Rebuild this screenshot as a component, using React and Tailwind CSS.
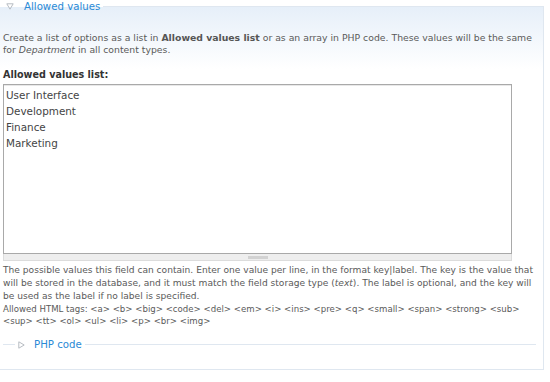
import React from "react";

const values = ["User Interface", "Development", "Finance", "Marketing"];

function DownTriangle() {
  return (
    <svg width="8" height="7" viewBox="0 0 8 7" className="shrink-0">
      <path d="M0.8 0.8 H7.2 L4 6.2 Z" fill="none" stroke="#b7bcc2" strokeWidth="1" />
    </svg>
  );
}

function RightTriangle() {
  return (
    <svg width="7" height="8" viewBox="0 0 7 8" className="shrink-0">
      <path d="M0.8 0.8 V7.2 L6.2 4 Z" fill="none" stroke="#b7bcc2" strokeWidth="1" />
    </svg>
  );
}

export default function App() {
  return (
    <div className="h-[382px] w-[550px] overflow-hidden bg-white font-['DejaVu_Sans',Verdana,sans-serif] text-[#5a5a5a]">
      <fieldset className="w-[544px] border-t border-r border-b border-[#dfe7f0] bg-[linear-gradient(to_bottom,#e6eff9,#ffffff_62px)] pb-[18px]">
        <legend className="flex items-center pr-[3px]">
          <span className="flex w-[24px] justify-center pl-[2px] pr-[6px]">
            <DownTriangle />
          </span>
          <span className="text-[10.2px] leading-[13px] text-[#2a8ad6]">Allowed values</span>
        </legend>

        <div className="pl-[3px]">
          <p className="mt-[19px] text-[9.3px] leading-[12px]">
            Create a list of options as a list in <b className="font-bold text-[#555]">Allowed values list</b> or as an array in PHP code. These values will be the same for <i>Department</i> in all content types.
          </p>

          <p className="mt-[12px] text-[9.6px] font-bold leading-[13px] text-[#333]">Allowed values list:</p>

          <div className="mt-[3px] w-[509px]">
            <div className="h-[170px] border border-[#a9a9a9] bg-white px-[2px] pt-[2px] shadow-[inset_0_1px_0_#e8e8e8]">
              {values.map((v) => (
                <div key={v} className="text-[10.4px] leading-[16px] text-[#444]">
                  {v}
                </div>
              ))}
            </div>
            <div className="flex h-[7px] justify-center border-x border-b border-[#dcdcdc] bg-[#eeeeee]">
              <div className="mt-[2px] h-[3px] w-[20px] bg-[#d2d2d2]" />
            </div>
          </div>

          <p className="mt-[3px] text-[9.1px] leading-[13px]">
            The possible values this field can contain. Enter one value per line, in the format key|label. The key is the value that will be stored in the database, and it must match the field storage type (<i>text</i>). The label is optional, and the key will be used as the label if no label is specified.
          </p>
          <p className="text-[8.6px] leading-[12px]">
            Allowed HTML tags: &lt;a&gt; &lt;b&gt; &lt;big&gt; &lt;code&gt; &lt;del&gt; &lt;em&gt; &lt;i&gt; &lt;ins&gt; &lt;pre&gt; &lt;q&gt; &lt;small&gt; &lt;span&gt; &lt;strong&gt; &lt;sub&gt; &lt;sup&gt; &lt;tt&gt; &lt;ol&gt; &lt;ul&gt; &lt;li&gt; &lt;p&gt; &lt;br&gt; &lt;img&gt;
          </p>

          <fieldset className="mt-[11px] w-[533px] border-t border-[#dfe7f0]">
            <legend className="ml-[12px] flex items-center px-[3px]">
              <RightTriangle />
              <span className="ml-[9px] text-[10.2px] leading-[13px] text-[#2a8ad6]">PHP code</span>
            </legend>
          </fieldset>
        </div>
      </fieldset>
    </div>
  );
}
